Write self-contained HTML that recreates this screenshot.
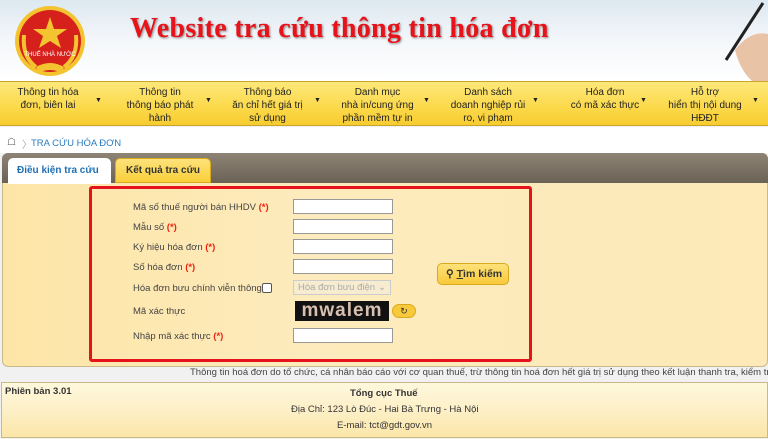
<!DOCTYPE html>
<html><head><meta charset="utf-8"><style>
*{margin:0;padding:0;box-sizing:border-box}
body{width:768px;height:439px;overflow:hidden;background:#f1f1f1;font-family:"Liberation Sans",Arial,sans-serif;font-size:10px;color:#333;position:relative}
.abs{position:absolute}
#hdr{left:0;top:0;width:768px;height:81px;background:linear-gradient(#dde8f0,#f4f7fa 50%,#fff)}
#title{left:130px;top:13px;font-family:"Liberation Serif",serif;font-weight:bold;font-size:28px;color:#e8121a;text-shadow:1px 1px 2px #888;white-space:nowrap;letter-spacing:0.3px}
#nav{left:0;top:81px;width:768px;height:45px;background:linear-gradient(#fde87a,#fcd94a 60%,#f7cc30);border-top:1px solid #c9a52a;border-bottom:1px solid #c9a52a}
.ni{position:absolute;top:4px;text-align:center;font-size:10px;line-height:13px;color:#222}
.ar{position:absolute;top:15px;font-size:7px;color:#222}
.lab{position:absolute;left:133px;font-size:9.5px;color:#444}
.lab b{color:#e21;font-weight:bold}
.inp{position:absolute;left:293px;width:100px;height:15px;background:#fff;border:1px solid #999}
</style></head><body>
<div id="hdr" class="abs"></div>
<svg class="abs" style="left:12px;top:5px" width="76" height="73" viewBox="0 0 76 73">
<ellipse cx="38" cy="36" rx="35" ry="35" fill="#f4c430"/>
<ellipse cx="38" cy="36" rx="31" ry="31" fill="#d6201c"/>
<path d="M38 12 L42 24 L55 24 L45 31 L49 43 L38 36 L27 43 L31 31 L21 24 L34 24Z" fill="#f4c430"/>
<path d="M12 30 Q10 52 24 62 M64 30 Q66 52 52 62" stroke="#f4c430" stroke-width="4" fill="none"/>
<rect x="22" y="44" width="32" height="8" fill="#d6201c"/>
<text x="38" y="51" font-size="6" fill="#fff" text-anchor="middle" font-family="Liberation Sans">THUẾ NHÀ NƯỚC</text>
<path d="M24 62 Q38 54 52 62 L50 68 Q38 62 26 68Z" fill="#f4c430"/>
</svg>
<div id="title" class="abs">Website tra cứu thông tin hóa đơn</div>
<svg class="abs" style="left:660px;top:0" width="108" height="81"><path d="M103 3 L66 60" stroke="#222" stroke-width="3"/><path d="M75 50 Q90 30 108 34 L108 81 L92 81 Q80 70 75 50Z" fill="#e9c3a6"/></svg>
<div id="nav" class="abs">
<div class="ni" style="left:8px;width:80px">Thông tin hóa<br>đơn, biên lai</div><span class="ar" style="left:95px">▼</span>
<div class="ni" style="left:120px;width:80px">Thông tin<br>thông báo phát<br>hành</div><span class="ar" style="left:205px">▼</span>
<div class="ni" style="left:225px;width:85px">Thông báo<br>ăn chỉ hết giá trị<br>sử dụng</div><span class="ar" style="left:314px">▼</span>
<div class="ni" style="left:335px;width:85px">Danh mục<br>nhà in/cung ứng<br>phần mềm tự in</div><span class="ar" style="left:423px">▼</span>
<div class="ni" style="left:443px;width:90px">Danh sách<br>doanh nghiệp rủi<br>ro, vi phạm</div><span class="ar" style="left:532px">▼</span>
<div class="ni" style="left:560px;width:90px">Hóa đơn<br>có mã xác thực</div><span class="ar" style="left:640px">▼</span>
<div class="ni" style="left:660px;width:90px">Hỗ trợ<br>hiển thị nội dung<br>HĐĐT</div><span class="ar" style="left:752px">▼</span>
</div>
<div class="abs" style="left:0;top:127px;width:768px;height:26px;background:#fff"></div>
<div class="abs" style="left:7px;top:137px;font-size:10px;color:#555">&#9750;</div>
<div class="abs" style="left:22px;top:136px;color:#aaa">〉</div>
<div class="abs" style="left:31px;top:138px;font-size:9.5px;color:#2a7bbf">TRA CỨU HÓA ĐƠN</div>
<div class="abs" style="left:2px;top:153px;width:766px;height:214px;border:1px solid #c8b88a;border-radius:6px;background:linear-gradient(90deg,#fde5a6,#fdebbd 40%,#fdeab8)"></div>
<div class="abs" style="left:2px;top:153px;width:766px;height:30px;background:linear-gradient(#8d8475,#6b6256);border-radius:6px 6px 0 0"></div>
<div class="abs" style="left:8px;top:158px;width:103px;height:26px;background:#fff;border-radius:5px 5px 0 0;font-size:10px;font-weight:bold;color:#1e6fb5;padding:7px 0 0 9px">Điều kiện tra cứu</div>
<div class="abs" style="left:115px;top:158px;width:96px;height:25px;background:linear-gradient(#fde27a,#f9cf3a);border:1px solid #d9a920;border-radius:5px 5px 0 0;font-size:10px;font-weight:bold;color:#333;padding:6px 0 0 10px">Kết quả tra cứu</div>
<div class="abs" style="left:89px;top:186px;width:443px;height:176px;border:3px solid #e5131b;border-radius:3px"></div>
<div class="lab" style="top:202px">Mã số thuế người bán HHDV <b>(*)</b></div><div class="inp" style="top:199px"></div>
<div class="lab" style="top:222px">Mẫu số <b>(*)</b></div><div class="inp" style="top:219px"></div>
<div class="lab" style="top:242px">Ký hiệu hóa đơn <b>(*)</b></div><div class="inp" style="top:239px"></div>
<div class="lab" style="top:262px">Số hóa đơn <b>(*)</b></div><div class="inp" style="top:259px"></div>
<div class="lab" style="top:283px">Hóa đơn bưu chính viễn thông</div>
<div class="abs" style="left:262px;top:283px;width:10px;height:10px;border:1px solid #555;background:#fff;border-radius:2px"></div>
<div class="abs" style="left:293px;top:280px;width:98px;height:15px;border:1px solid #ccc;background:#f7ecd0;color:#aaa;font-size:9.5px;padding:1px 4px">Hóa đơn bưu điện <span style="float:right">⌄</span></div>
<div class="lab" style="top:306px">Mã xác thực</div>
<div class="abs" style="left:295px;top:301px;width:94px;height:20px;background:#111;color:#d8c0b0;font-weight:bold;font-size:19px;line-height:20px;letter-spacing:1px;text-align:center">mwalem</div>
<div class="abs" style="left:392px;top:304px;width:24px;height:14px;background:#f8c93a;border:1px solid #d9a920;border-radius:7px;font-size:9px;text-align:center;line-height:12px">↻</div>
<div class="lab" style="top:331px">Nhập mã xác thực <b>(*)</b></div><div class="inp" style="top:328px"></div>
<div class="abs" style="left:437px;top:263px;width:72px;height:22px;background:linear-gradient(#fde27a,#f8c93a);border:1px solid #d9a920;border-radius:5px;font-size:10.5px;font-weight:bold;color:#333;padding:4px 0 0 8px">⚲ <u>T</u>ìm kiếm</div>
<div class="abs" style="left:190px;top:367px;font-size:9.5px;color:#444;white-space:nowrap">Thông tin hoá đơn do tổ chức, cá nhân báo cáo với cơ quan thuế, trừ thông tin hoá đơn hết giá trị sử dụng theo kết luận thanh tra, kiểm tra</div>
<div class="abs" style="left:1px;top:382px;width:767px;height:56px;border:1px solid #c8b88a;background:linear-gradient(#fff8dc,#fdf0c8 50%,#fbe6a8)"></div>
<div class="abs" style="left:5px;top:386px;font-size:9.5px;font-weight:bold">Phiên bản 3.01</div>
<div class="abs" style="left:350px;top:388px;font-size:9.5px;font-weight:bold">Tổng cục Thuế</div>
<div class="abs" style="left:291px;top:404px;font-size:9.5px">Địa Chỉ: 123 Lò Đúc - Hai Bà Trưng - Hà Nội</div>
<div class="abs" style="left:337px;top:420px;font-size:9.5px">E-mail: tct@gdt.gov.vn</div>
</body></html>
